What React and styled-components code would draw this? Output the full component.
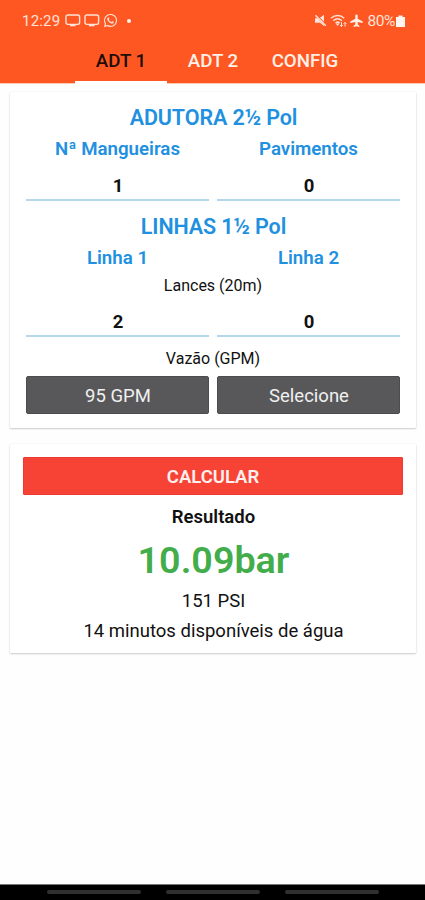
import React, { Component } from 'react'
import styled, { createGlobalStyle } from 'styled-components'
import { FaWhatsapp } from 'react-icons/fa'

const GlobalStyle = createGlobalStyle`
  * {
    box-sizing: border-box;
  }
  body {
    margin: 0;
    background: #fff;
    font-family: Roboto, 'Liberation Sans', sans-serif;
    color: #111;
  }
`

const Screen = styled.div`
  height: 900px;
  display: flex;
  flex-direction: column;
  background: #fefefe;
  overflow: hidden;
`

const Header = styled.header`
  height: 84px;
  flex: none;
  background: #ff5722;
  border-bottom: 1px solid #ffc9b6;
`

const StatusBar = styled.div`
  height: 41px;
  padding: 0 20px 0 22px;
  display: flex;
  align-items: center;
  justify-content: space-between;
  color: #ffe3d8;
  font-size: 15px;
`

const StatusGroup = styled.div`
  display: flex;
  align-items: center;
  gap: ${(props) => props.gap}px;
  svg {
    display: block;
    flex: none;
  }
`

const Clock = styled.span`
  margin-right: 2px;
  letter-spacing: 0.2px;
`

const Dot = styled.span`
  width: 4px;
  height: 4px;
  margin-left: 6px;
  border-radius: 50%;
  background: #fff0e8;
`

const Battery = styled.span`
  display: flex;
  align-items: center;
  gap: 1px;
  margin-left: 1px;
  font-size: 15.5px;
  letter-spacing: -0.4px;
`

const Tabs = styled.nav`
  display: flex;
  height: 43px;
  padding-left: 75px;
`

const Tab = styled.button`
  width: 92px;
  height: 43px;
  padding: 0;
  border: 0;
  border-bottom: 3px solid ${(props) => (props.$active ? '#fff' : 'transparent')};
  background: none;
  color: ${(props) => (props.$active ? '#1c0d08' : '#fff0e8')};
  font: 500 18.7px/38px Roboto, sans-serif;
`

const Content = styled.main`
  flex: 1;
  padding: 8px 9px 0 10px;
`

const Card = styled.section`
  height: ${(props) => props.height}px;
  margin-bottom: 16px;
  padding: ${(props) => props.pad};
  background: #fff;
  border-radius: 1px;
  box-shadow: 0 1px 2px rgba(0, 0, 0, 0.2), 0 0 1px rgba(0, 0, 0, 0.12);
`

const Title = styled.h2`
  margin: ${(props) => props.top || 0}px 0 0;
  padding-left: 1px;
  text-align: center;
  color: #2190e0;
  font-size: 21.5px;
  font-weight: 600;
  line-height: 31px;
  letter-spacing: -0.1px;
`

const Columns = styled.div`
  display: grid;
  grid-template-columns: 1fr 1fr;
  column-gap: 8px;
  margin-top: ${(props) => props.top || 0}px;
`

const Label = styled.label`
  padding-top: ${(props) => props.top || 1}px;
  text-align: center;
  color: #2190e0;
  font-size: 18.7px;
  font-weight: 600;
  line-height: ${(props) => props.line}px;
`

const Field = styled.input`
  width: 100%;
  height: ${(props) => props.height}px;
  padding: ${(props) => props.height - 29}px 0 0 1px;
  border: 0;
  border-bottom: 2px solid #b3d8ee;
  background: none;
  text-align: center;
  color: #111;
  font: 700 18.5px Roboto, sans-serif;
`

const Caption = styled.div`
  margin-top: ${(props) => props.top || 0}px;
  padding-top: 1px;
  text-align: center;
  font-size: 16px;
  line-height: 26px;
`

const Select = styled.button`
  height: 38px;
  padding: 1px 0 0 1px;
  border: 1px solid #4c4c4e;
  border-radius: 2px;
  background: #58585a;
  color: #f0f0f0;
  font: 400 18.5px/36px Roboto, sans-serif;
`

const Calculate = styled.button`
  display: block;
  width: 100%;
  height: 38px;
  padding: 1px 0 0;
  border: 1px solid #ee3a2e;
  border-radius: 1px;
  background: #f74336;
  color: #fff0ee;
  font: 600 18.5px/36px Roboto, sans-serif;
`

const Line = styled.div`
  padding-left: 1px;
  text-align: center;
  color: ${(props) => props.color || '#111'};
  font-size: ${(props) => props.size}px;
  font-weight: ${(props) => props.weight || 400};
  line-height: ${(props) => props.line}px;
`

const NavBar = styled.footer`
  flex: none;
  height: 16px;
  padding: 5px 46px 0 47px;
  display: flex;
  justify-content: space-between;
  background: #000;
  border-top: 1px solid #777;
`

const Pill = styled.span`
  width: 94px;
  height: 4px;
  border-radius: 2px;
  background: #303030;
`

const ScreenIcon = () => (
  <svg width="16" height="13" viewBox="0 0 16 13" fill="none" stroke="currentColor" strokeWidth="1.4">
    <rect x="1" y="1" width="13.6" height="9.4" rx="1.8" />
    <path d="M5 11.4h5.6" strokeWidth="1.8" />
  </svg>
)

const MuteIcon = () => (
  <svg width="13" height="13" viewBox="0 0 13 13" fill="currentColor">
    <path d="M1 4.3h2.4L10 10.8V12L6 8.8H1z" />
    <path d="M6 3.7L10 .8v6.9z" />
    <path d="M1.4 1.2l10.4 10.6" stroke="currentColor" strokeWidth="1.5" />
  </svg>
)

const WifiIcon = () => (
  <svg width="17" height="14" viewBox="0 0 17 14" fill="none" stroke="currentColor" strokeWidth="1.5">
    <path d="M1 4.2C5 .7 10.4 .7 14.2 4.2M3.3 6.7c2.6-2.4 6-2.4 8.6 0M5.6 9c1.3-1.1 2.8-1.1 4 0" />
    <path d="M7.6 12l-2-2.5h4z" fill="currentColor" stroke="none" />
    <path d="M11.5 8v4.5M10 11l1.5 1.5L13 11M15 12.5V8.5M13.6 9.8L15 8.4l1.4 1.4" strokeWidth="1" />
  </svg>
)

const PlaneIcon = () => (
  <svg width="13" height="13" viewBox="0 0 13 13" fill="#fff0e8">
    <path d="M5.3 1.6a1.2 1.2 0 0 1 2.4 0V4.800l5 2.600v1.500L7.700 7.900v2.600l1.700 1.200v1.200l-2.900-.7-2.900.7v-1.200l1.700-1.200V7.900L.3 8.900V7.400l5-2.600z" />
  </svg>
)

const BatteryIcon = () => (
  <svg width="9" height="12" viewBox="0 0 9 12" fill="#fff5f0">
    <path d="M2.5 .5h4V2H9v10H0V2h2.5z" />
  </svg>
)

export default class App extends Component {
  render() {
    return (
      <Screen>
        <GlobalStyle />
        <Header>
          <StatusBar>
            <StatusGroup gap={3}>
              <Clock>12:29</Clock>
              <ScreenIcon />
              <ScreenIcon />
              <FaWhatsapp size={15} />
              <Dot />
            </StatusGroup>
            <StatusGroup gap={3}>
              <MuteIcon />
              <WifiIcon />
              <PlaneIcon />
              <Battery>
                80%
                <BatteryIcon />
              </Battery>
            </StatusGroup>
          </StatusBar>
          <Tabs>
            <Tab $active>ADT 1</Tab>
            <Tab>ADT 2</Tab>
            <Tab>CONFIG</Tab>
          </Tabs>
        </Header>

        <Content>
          <Card height={336} pad="10px 16px 0">
            <Title>ADUTORA 2½ Pol</Title>
            <Columns>
              <Label line={30}>Nª Mangueiras</Label>
              <Label line={30}>Pavimentos</Label>
              <Field height={37} defaultValue="1" />
              <Field height={37} defaultValue="0" />
            </Columns>
            <Title top={10}>LINHAS 1½ Pol</Title>
            <Columns>
              <Label top={2} line={28}>Linha 1</Label>
              <Label top={2} line={28}>Linha 2</Label>
            </Columns>
            <Caption>Lances (20m)</Caption>
            <Columns>
              <Field height={38} defaultValue="2" />
              <Field height={38} defaultValue="0" />
            </Columns>
            <Caption top={8}>Vazão (GPM)</Caption>
            <Columns top={4}>
              <Select>95 GPM</Select>
              <Select>Selecione</Select>
            </Columns>
          </Card>

          <Card height={209} pad="13px 13px 0">
            <Calculate>CALCULAR</Calculate>
            <Line size={18.5} weight={600} line={44}>Resultado</Line>
            <Line size={37.7} weight={600} line={42} color="#43ad4b">10.09bar</Line>
            <Line size={18.5} line={40}>151 PSI</Line>
            <Line size={18.5} line={20}>14 minutos disponíveis de água</Line>
          </Card>
        </Content>

        <NavBar>
          <Pill />
          <Pill />
          <Pill />
        </NavBar>
      </Screen>
    )
  }
}
